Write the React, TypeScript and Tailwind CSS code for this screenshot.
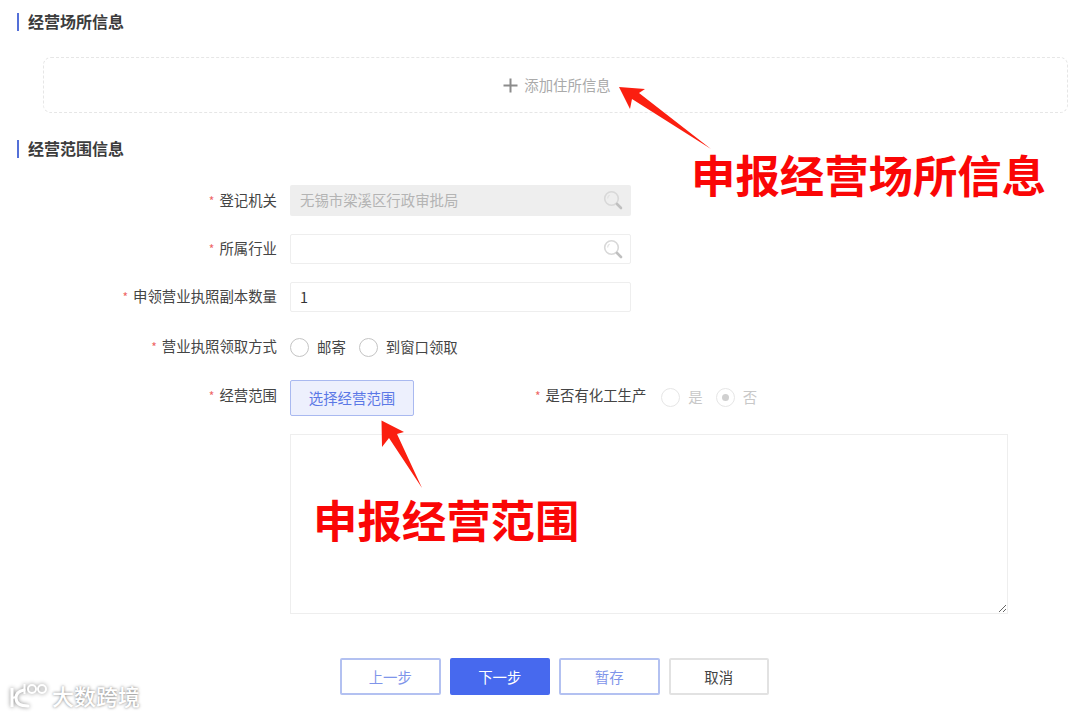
import React from "react";

const font = "font-['Noto_Sans_CJK_SC','Noto_Sans',sans-serif]";

const SearchIcon = () => (
  <svg width="20" height="20" viewBox="0 0 20 20" fill="none" className="shrink-0">
    <circle cx="8.5" cy="8.5" r="6.8" stroke="#d8d8d8" strokeWidth="1.6" />
    <path d="M4.6 8.5a4 4 0 0 1 2-3.4" stroke="#e0e0e0" strokeWidth="1.2" />
    <path d="M14 14l4 4" stroke="#c0c0c0" strokeWidth="2.6" strokeLinecap="round" />
  </svg>
);

const Heading = ({ title }: { title: string }) => (
  <div className="flex h-[18px] items-center gap-[9px] pl-[17px]">
    <div className="h-[18px] w-[2px] bg-[#5470d8]" />
    <h3 className="pb-[2px] text-[16px] font-bold leading-[18px] text-[#3c3c3c]">{title}</h3>
  </div>
);

const Label = ({ text, width = "w-[277px]" }: { text: string; width?: string }) => (
  <div className={`${width} shrink-0 pb-[1px] text-right text-[14.4px] leading-[20px] text-[#444444]`}>
    <span className="mr-[5px] text-[12px] text-[#ee6666]">*</span>
    {text}
  </div>
);

const Radio = ({ disabled, checked, text }: { disabled?: boolean; checked?: boolean; text: string }) => (
  <div className="flex items-center gap-[8px]">
    <div
      className={`flex h-[19px] w-[19px] items-center justify-center rounded-full border ${
        disabled ? "border-[#e6e6e6]" : "border-[#c4c4c4]"
      }`}
    >
      {checked && <div className="h-[7px] w-[7px] rounded-full bg-[#d0d0d0]" />}
    </div>
    <span className={`pb-[1px] text-[14.4px] leading-[20px] ${disabled ? "text-[#c8c8c8]" : "text-[#444444]"}`}>
      {text}
    </span>
  </div>
);

const FootButton = ({ text, className }: { text: string; className: string }) => (
  <button className={`h-[37px] w-[100.5px] rounded-[2px] border-2 text-[14.4px] ${className}`}>{text}</button>
);

export default function App() {
  return (
    <div className={`relative h-[715px] w-[1080px] overflow-hidden bg-white ${font}`}>
      <div className="pt-[13px]">
        <Heading title="经营场所信息" />

        <div className="ml-[43px] mt-[26px] flex h-[56px] w-[1025px] items-center justify-center gap-[6px] rounded-[8px] border border-dashed border-[#e6e6e6] pl-[3px]">
          <svg width="15" height="15" viewBox="0 0 15 15" className="shrink-0">
            <path d="M7.5 0.5v14M0.5 7.5h14" stroke="#8c8c8c" strokeWidth="2" />
          </svg>
          <span className="text-[14.4px] text-[#aaaaaa]">添加住所信息</span>
        </div>

        <div className="mt-[27px]">
          <Heading title="经营范围信息" />
        </div>

        <div className="mt-[27px] flex flex-col">
          <div className="flex h-[31px] items-center gap-[13px]">
            <Label text="登记机关" />
            <div className="flex h-[31px] w-[341px] items-center justify-between rounded-[2px] bg-[#eeeeee] pb-[1px] pl-[10px] pr-[8px]">
              <span className="text-[14.4px] text-[#b4b4b4]">无锡市梁溪区行政审批局</span>
              <SearchIcon />
            </div>
          </div>

          <div className="mt-[18px] flex h-[30px] items-center gap-[13px]">
            <Label text="所属行业" />
            <div className="flex h-[30px] w-[341px] items-center justify-end rounded-[2px] border border-[#eeeeee] pr-[7px]">
              <SearchIcon />
            </div>
          </div>

          <div className="mt-[18px] flex h-[30px] items-center gap-[13px]">
            <Label text="申领营业执照副本数量" />
            <div className="flex h-[30px] w-[341px] items-center rounded-[2px] border border-[#eeeeee] pl-[9px] text-[14.4px] text-[#333333]">
              1
            </div>
          </div>

          <div className="mt-[20px] flex h-[30px] items-center gap-[13px]">
            <Label text="营业执照领取方式" />
            <div className="flex items-center gap-[13px]">
              <Radio text="邮寄" />
              <Radio text="到窗口领取" />
            </div>
          </div>

          <div className="mt-[18px] flex items-start gap-[13px]">
            <div className="pt-[5px]">
              <Label text="经营范围" />
            </div>
            <div className="flex flex-col">
              <div className="flex items-start">
                <button className="h-[36px] w-[124px] rounded-[2px] border border-[#a9b9f0] bg-[#edf0fd] text-[14.4px] text-[#5b78e6]">
                  选择经营范围
                </button>
                <div className="ml-[121px] flex h-[36px] items-start gap-[15px] pt-[5px]">
                  <Label text="是否有化工生产" width="w-auto" />
                  <div className="flex items-center gap-[13px] pt-[2px]">
                    <Radio disabled text="是" />
                    <Radio disabled checked text="否" />
                  </div>
                </div>
              </div>
              <textarea className="mt-[18px] block h-[180px] w-[718px] border border-[#eeeeee] outline-none" />
            </div>
          </div>

          <div className="ml-[340px] mt-[44px] flex gap-[9px]">
            <FootButton text="上一步" className="border-[#b3c1f1] bg-white text-[#7f95ea]" />
            <FootButton text="下一步" className="border-[#4769ee] bg-[#4769ee] text-white" />
            <FootButton text="暂存" className="border-[#b3c1f1] bg-white text-[#7f95ea]" />
            <FootButton text="取消" className="border-[#e2e2e2] bg-white text-[#444444]" />
          </div>
        </div>
      </div>

      {/* annotations drawn over the form */}
      <svg width="1080" height="715" viewBox="0 0 1080 715" className="pointer-events-none absolute left-0 top-0">
        <polygon points="619,87 645,89 639,93 711,149 632,99 630,109" fill="#fb1f10" />
        <polygon points="381.5,420.5 404,432 397,434 422,488 389,438 382,447" fill="#fb1f10" />
      </svg>
      <div className="absolute left-[691px] top-[142px] whitespace-nowrap text-[44.4px] font-bold leading-[64px] text-[#fa0606]">
        申报经营场所信息
      </div>
      <div className="absolute left-[313px] top-[487px] whitespace-nowrap text-[44.4px] font-bold leading-[64px] text-[#fa0606]">
        申报经营范围
      </div>

      {/* watermark */}
      <div className="absolute left-[9px] top-[680px] flex items-center gap-[3px]">
        <svg width="40" height="28" viewBox="0 0 40 28" fill="none" className="drop-shadow-[0_0_2px_#8a8a8a]">
          <path d="M3 7v19" stroke="#fff" strokeWidth="3" />
          <path d="M15 9c-5 1-8 4-8 8 0 5 4 8 12 8" stroke="#fff" strokeWidth="3" strokeLinecap="round" />
          <path d="M6 16l-2 1" stroke="#fff" strokeWidth="2" />
          <path d="M15.5 3v10" stroke="#fff" strokeWidth="2" />
          <circle cx="23" cy="8" r="4" stroke="#fff" strokeWidth="2" />
          <circle cx="33" cy="8" r="4" stroke="#fff" strokeWidth="2" />
        </svg>
        <span className="text-[22px] font-medium leading-[30px] text-white [text-shadow:0_0_3px_#777777]">大数跨境</span>
      </div>
    </div>
  );
}
